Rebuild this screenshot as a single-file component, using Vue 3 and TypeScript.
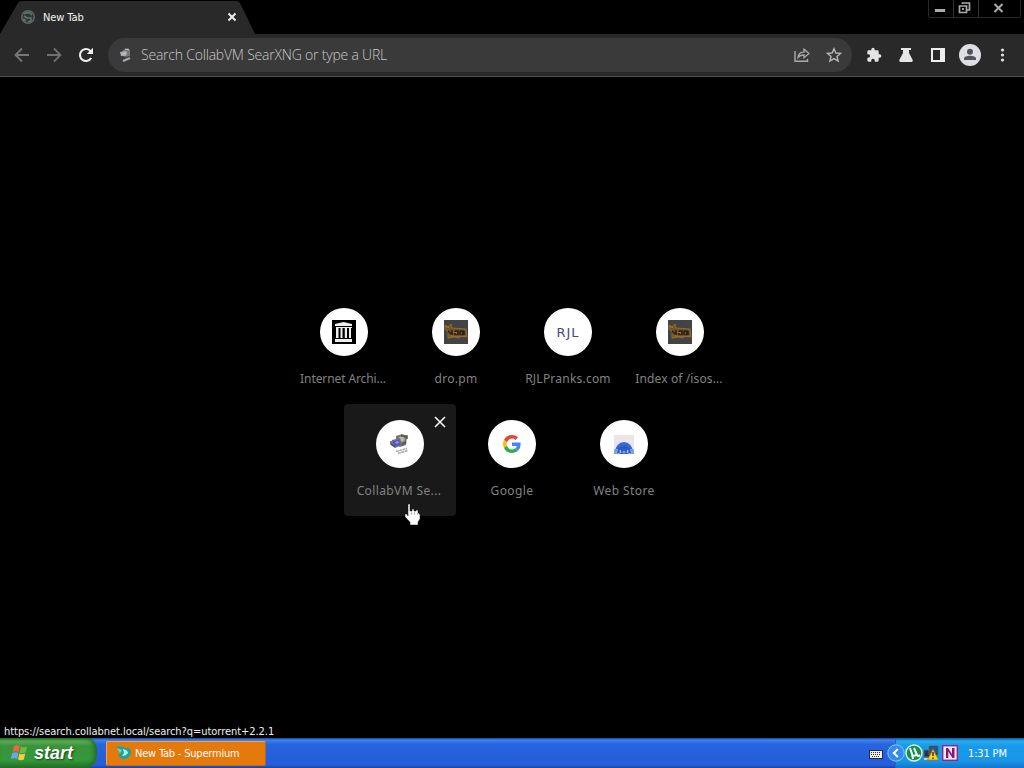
<script setup lang="ts">
interface Shortcut {
  label: string
  icon: string
  tracking: number
  hovered?: boolean
}

const rows: Shortcut[][] = [
  [
    { label: 'Internet Archi...', icon: 'archive', tracking: -0.1 },
    { label: 'dro.pm', icon: 'dro', tracking: 0.3 },
    { label: 'RJLPranks.com', icon: 'rjl', tracking: 0.22 },
    { label: 'Index of /isos...', icon: 'dro', tracking: 0.12 },
  ],
  [
    { label: 'CollabVM Se...', icon: 'collab', tracking: 0.38, hovered: true },
    { label: 'Google', icon: 'google', tracking: 0.4 },
    { label: 'Web Store', icon: 'store', tracking: 0.42 },
  ],
]
</script>

<template>
  <div class="screen">
    <header class="titlebar">
      <svg class="tab-shape" width="256" height="34" viewBox="0 0 256 34"><path d="M0 34 L18 3 Q19 1 22 1 H236 Q239 1 240 3 L255 34Z" fill="#292929" /></svg>
      <div class="tab">
        <svg width="16" height="16" viewBox="0 0 16 16"><circle cx="8" cy="8" r="6.3" fill="#303636" stroke="#5d6565" stroke-width="1.5" /><path d="M4 5Q6 3 10 4L12 6M4 7L7 9L11 9L11 12L8 13M3 10L6 12" fill="none" stroke="#687070" stroke-width="1.6" /></svg>
        <span class="tab-title">New Tab</span>
        <svg class="tab-close" width="10" height="10" viewBox="0 0 10 10"><path d="M1.5 1.5L8.5 8.5M8.5 1.5L1.5 8.5" stroke="#f2f2f2" stroke-width="1.9" /></svg>
      </div>
      <div class="window-buttons">
        <span><svg width="24" height="17" viewBox="0 0 24 17"><rect x="6" y="9" width="10" height="3" fill="#aaa" /></svg></span>
        <span><svg width="24" height="17" viewBox="0 0 24 17"><path d="M8.5 4V3H15.5V10H13M5.5 6H12.5V12.5H5.5Z" fill="none" stroke="#aaa" stroke-width="1.7" /><rect x="8" y="8" width="2" height="2" fill="#999" /></svg></span>
        <span><svg width="41" height="17" viewBox="0 0 41 17"><path d="M15.5 4L23.5 12M23.5 4L15.5 12" stroke="#aaa" stroke-width="2" /></svg></span>
      </div>
    </header>

    <nav class="toolbar">
      <svg class="tool back" width="16" height="16" viewBox="0 0 16 16"><path d="M15 8H2M8 1.5L1.5 8L8 14.5" fill="none" stroke="#777" stroke-width="1.8" /></svg>
      <svg class="tool forward" width="16" height="16" viewBox="0 0 16 16"><path d="M1 8H14M8 1.5L14.5 8L8 14.5" fill="none" stroke="#707070" stroke-width="1.8" /></svg>
      <svg class="tool reload" width="16" height="16" viewBox="0 0 16 16"><path d="M13.2 11A6 6 0 1 1 12.2 3.7L14 5.5" fill="none" stroke="#eee" stroke-width="2.1" /><path d="M15 .8V7H8.8Z" fill="#eee" /></svg>
      <div class="omnibox">
        <svg class="site-icon" width="16" height="16" viewBox="0 0 16 16"><path d="M5 3L10 1L12 3V9L7 10L3 8Z" fill="#777" /><path d="M2 5L8 4L9 6L8 9L3 9Z" fill="#aaa9b5" /><path d="M4 7L8 6M7 2L11 3" stroke="#c5c5c5" stroke-width="1" /><path d="M5 14L12 11" stroke="#aaa" stroke-width="2" /></svg>
        <span class="placeholder">Search CollabVM SearXNG or type a URL</span>
        <svg class="share" width="16" height="16" viewBox="0 0 16 16"><path d="M1 4V14.3H13.5V12" fill="none" stroke="#aaa" stroke-width="1.4" /><path d="M4 10.5Q4.5 5.2 10 5.2V2.2L15 6.6L10 10.7V8Q6 8 4 10.5Z" fill="none" stroke="#aaa" stroke-width="1.3" /></svg>
        <svg class="star" width="16" height="16" viewBox="0 0 16 16"><path d="M8 1.7L9.9 6L14.5 6.4L11 9.5L12.1 14L8 11.6L3.9 14L5 9.5L1.5 6.4L6.1 6Z" fill="none" stroke="#b6b6b6" stroke-width="1.4" /></svg>
      </div>
      <div class="actions">
        <svg width="16" height="16" viewBox="0 0 24 24"><path fill="#e4e4e4" d="M20.5 11H19V7a2 2 0 0 0-2-2h-4V3.5a2.5 2.5 0 0 0-5 0V5H4a2 2 0 0 0-2 2v3.8h1.5a2.7 2.7 0 0 1 0 5.4H2V20a2 2 0 0 0 2 2h3.8v-1.5a2.7 2.7 0 0 1 5.4 0V22H17a2 2 0 0 0 2-2v-4h1.5a2.5 2.5 0 0 0 0-5z" /></svg>
        <svg width="16" height="16" viewBox="0 0 16 16"><path d="M3 1H13V3H11V6L14.7 13Q15.3 15 13.3 15H2.7Q.7 15 1.3 13L5 6V3H3Z" fill="#e7e7e7" /></svg>
        <svg width="16" height="16" viewBox="0 0 16 16"><path fill-rule="evenodd" d="M1 1H15V15H1ZM3 3V13H10V3Z" fill="#eee" /></svg>
        <svg width="22" height="22" viewBox="0 0 22 22"><circle cx="11" cy="11" r="11" fill="#dedfe3" /><circle cx="11" cy="7.8" r="3" fill="#51535c" /><path d="M5 16V14.5C5 10.8 17 10.8 17 14.5V16Z" fill="#51535c" /></svg>
        <svg width="16" height="16" viewBox="0 0 16 16"><g fill="#e4e4e4"><circle cx="8.5" cy="3" r="1.6" /><circle cx="8.5" cy="8" r="1.6" /><circle cx="8.5" cy="13" r="1.6" /></g></svg>
      </div>
    </nav>

    <main>
      <section v-for="(row, index) in rows" :key="index" class="shortcut-row">
        <div v-for="item in row" :key="item.label" class="shortcut" :class="{ hovered: item.hovered, truncated: item.label.endsWith('...') }">
          <div class="disc">
            <svg v-if="item.icon === 'archive'" width="24" height="24" viewBox="0 0 24 24"><path fill="#000" d="M0 0H24V24H0Z" /><path fill="#eee" d="M3 4L11.5 2L20 4V6H3ZM4 7H20V8H4ZM4 8H6.5V18H4ZM8.5 8H10.5V18H8.5ZM12.8 8H15V18H12.8ZM17 8H19V18H17ZM3 19H20V22H3Z" /></svg>
            <svg v-else-if="item.icon === 'dro'" width="24" height="24" viewBox="0 0 24 24"><path fill="#424247" d="M0 0H24V24H0Z" /><path d="M1 5L4 7L7 4L8 8L22 9L23 17L17 16L15 18L10 17L4 18L4 12L1 9Z" fill="#6d5429" stroke="#98702a" stroke-width=".9" /><path d="M4 11L7 14M8 10V15M11 11V15H14V11H11M16 11H19V15H16V11M20 11V15" stroke="#241f1b" stroke-width="1.5" fill="none" /><path d="M2 6L5 8M9 12L13 13M6 16H21" stroke="#bd852a" stroke-width=".8" /></svg>
            <span v-else-if="item.icon === 'rjl'" class="rjl">RJL</span>
            <svg v-else-if="item.icon === 'collab'" width="24" height="24" viewBox="0 0 24 24"><path d="M8 4L14 2L19 4L18 13L12 15L8 13Z" fill="#777768" /><path d="M11 5L15 4L17 8L14 10L11 8Z" fill="#b8b9a7" /><path d="M4 8L12 6L14 13L7 16L3 13Z" fill="#716e91" /><path d="M5 9L11 8L12 13L7 14L5 12Z" fill="#5553ca" /><path d="M7 10L10 9L11 11L8 12Z" fill="#9692ed" /><path d="M13 4H19V7M14 13L18 10M3 9V12L7 15" stroke="#535444" stroke-width="1.5" fill="none" /><path d="M8 19.5L19 16.5M10 21.5L20 18.5" stroke="#aaa" stroke-width="1.5" stroke-dasharray="3 .4" /></svg>
            <svg v-else-if="item.icon === 'google'" width="18" height="18" viewBox="0 0 48 48"><path fill="#EA4335" d="M24 9.5c3.5 0 6.7 1.2 9.2 3.6l6.8-6.8A23.9 23.9 0 0 0 24 0 24 24 0 0 0 2.6 13.2l7.9 6.2A14.3 14.3 0 0 1 24 9.5z" /><path fill="#4285F4" d="M47 24.5c0-1.6-.2-3.1-.4-4.5H24v9h12.9a11 11 0 0 1-4.7 7.2l7.7 6A24 24 0 0 0 47 24.5z" /><path fill="#FBBC05" d="M10.5 28.6a14.5 14.5 0 0 1 0-9.2l-7.9-6.2a24 24 0 0 0 0 21.6z" /><path fill="#34A853" d="M24 48c6.5 0 12-2.1 15.9-5.8l-7.7-6A14.4 14.4 0 0 1 10.5 28.6l-7.9 6.2A24 24 0 0 0 24 48z" /></svg>
            <svg v-else width="22" height="22" viewBox="0 0 22 22"><path fill="#e9e7ed" d="M1 2H21V21H1Z" /><path stroke="#ffd9ca" d="M5 5H17" /><path fill="#3767d6" d="M2 21V19A9 10 0 0 1 20 19V21Z" /><path d="M1 16H5L7 21H1ZM17 16H21V21H15Z" fill="#7ba4ef" /><path d="M5 20A6 6 0 0 1 17 20M8 21V18L11 16L14 18V21" stroke="#2854bd" stroke-width="1.5" fill="none" /><path d="M7 17L8 20M11 18V20M15 17L14 20" stroke="#b5d0ff" stroke-width="1.2" /></svg>
          </div>
          <span class="label" :style="{ letterSpacing: item.tracking + 'px' }">{{ item.label }}</span>
          <svg v-if="item.hovered" class="remove" width="12" height="12" viewBox="0 0 12 12"><path d="M1 1L11 11M11 1L1 11" stroke="#f1f1f1" stroke-width="1.7" /></svg>
        </div>
      </section>
    </main>

    <div class="status">https://search.collabnet.local/search?q=utorrent+2.2.1</div>

    <footer class="taskbar">
      <div class="start">
        <svg width="19" height="19" viewBox="0 0 19 19"><path d="M4 2Q7 0 10 2L8.5 8Q5 6.5 2.5 8Z" fill="#e8673e" /><path d="M11 2.5Q14 4 17 2.5L15.5 8.5Q12 10 9.5 8.5Z" fill="#72b83e" /><path d="M2.3 9Q5.5 7.5 8.3 9L7 15Q4 13.5.8 15Z" fill="#6ba5ee" /><path d="M9.3 9.5Q12 11 15.3 9.5L13.8 15.5Q11 17 8 15.5Z" fill="#f2cc45" /></svg>
        <span>start</span>
      </div>
      <div class="task">
        <svg width="16" height="16" viewBox="0 0 16 16"><path d="M0 2Q5 0 9 3Q15 2 15 8Q13 14 8 14Q4 14 2 10L5 8Z" fill="#17a69b" /><path d="M1 3L6 5L4 8Z" fill="#70d9cb" /><path d="M7 4Q12 5 12 8Q10 11 6 11L8 8Z" fill="#a8f4e6" /></svg>
        <span>New Tab - Supermium</span>
      </div>
      <svg class="keyboard" width="14" height="12" viewBox="0 0 14 12"><rect x=".5" y="3.5" width="13" height="8" fill="#f0eee5" stroke="#222b42" /><path d="M2 5.5H12M2 7.5H12M3 9.5H11" stroke="#333" stroke-dasharray="1 1" /></svg>
      <div class="tray">
        <svg class="collapse" width="18" height="18" viewBox="0 0 18 18"><circle cx="9" cy="9" r="8.2" fill="#338bea" stroke="#8bc5fb" /><path d="M10.8 5L6.8 9L10.8 13" stroke="#fff" stroke-width="2" fill="none" /></svg>
        <svg width="18" height="18" viewBox="0 0 18 18"><circle cx="9" cy="9" r="8" fill="#188b53" stroke="#d5f4db" stroke-width="1.4" /><path d="M5 4L7 10Q8 13 11 11M9 4L12 11Q13 13 15 11M7 10L8 15" stroke="#eefff0" stroke-width="2" fill="none" /></svg>
        <svg class="network" width="16" height="16" viewBox="0 0 16 16"><path d="M6 1H15V10H6ZM1 5H9V12H1Z" fill="#26324c" stroke="#596b73" /><path d="M7 2H14V8H7Z" fill="#21549a" /><path d="M1 14H9" stroke="#d8cf9e" stroke-width="2" /><path d="M10 4L15.5 15H4.5Z" fill="#ffd51e" stroke="#947814" stroke-width=".7" /><path d="M10 7V11M10 12.5V14" stroke="#312b13" stroke-width="1.4" /></svg>
        <svg class="onenote" width="16" height="16" viewBox="0 0 16 16"><rect x=".7" y=".7" width="14.6" height="14.6" fill="#f3e6f4" stroke="#92277f" stroke-width="1.4" /><path d="M4 13V3H6L10 9V3H12.5V13H10.5L6.3 6.5V13Z" fill="#851970" /></svg>
        <span class="clock">1:31 PM</span>
      </div>
    </footer>

    <svg class="cursor" width="17" height="23" viewBox="0 0 17 23"><path d="M4 1H6V8H8V6H10V8H12V7H14V10H15V11H16V16L14 19V22H6V19L1 14V11H3L4 13Z" fill="#fff" stroke="#111" stroke-width=".5" /><path d="M7.5 9V12M10.5 9V12M13.5 10V12" stroke="#888" stroke-width=".6" /></svg>
  </div>
</template>

<style>
html, body { margin: 0; background: #000; overflow: hidden; }
</style>

<style scoped>
* { box-sizing: border-box; }
svg { display: block; flex: none; }
span { white-space: pre; }
.screen { position: relative; width: 1024px; height: 768px; display: flex; flex-direction: column; background: #000; overflow: hidden; font-family: "DejaVu Sans Condensed", "DejaVu Sans", sans-serif; }
.titlebar { position: relative; height: 34px; flex: none; display: flex; justify-content: space-between; }
.tab-shape { position: absolute; left: 0; top: 0; }
.tab { position: relative; height: 34px; width: 256px; padding-left: 20px; display: flex; align-items: center; }
.tab-title { margin-left: 7px; width: 184px; font-size: 11px; letter-spacing: -.1px; color: #f3f3f3; }
.window-buttons { display: flex; width: 93px; height: 18px; margin-right: 3px; border: 1px solid #292929; border-top: 0; border-radius: 0 0 2px 2px; }
.window-buttons span + span { border-left: 1px solid #333; }
.toolbar { height: 43px; flex: none; background: #292929; border-bottom: 1px solid #505050; display: flex; align-items: center; padding: 0 0 1px 14px; }
.tool { margin-right: 16px; }
.reload { margin-right: 14px; }
.omnibox { width: 744px; height: 34px; border-radius: 17px; background: #3a3a3a; display: flex; align-items: center; padding-left: 10px; }
.placeholder { margin-left: 7px; width: 653px; font: 300 14px "Open Sans", "Noto Sans", sans-serif; letter-spacing: -.21px; color: #c8c8c8; }
.star { margin-left: 16px; }
.actions { margin-left: 14px; display: flex; align-items: center; gap: 16px; }
.actions svg:nth-child(4) { margin: 0 -3px; }
main { flex: 1; padding-top: 215px; display: flex; flex-direction: column; align-items: center; }
.shortcut-row { display: flex; height: 112px; }
.shortcut { position: relative; width: 112px; height: 112px; padding-top: 16px; border-radius: 4px; display: flex; flex-direction: column; align-items: center; }
.hovered { background: #191919; }
.disc { width: 48px; height: 48px; flex: none; border-radius: 50%; background: #fff; display: flex; align-items: center; justify-content: center; }
.label { margin-top: 13px; height: 20px; line-height: 20px; font-family: "Noto Sans", sans-serif; font-size: 12px; color: #828282; }
.truncated .label { margin-right: 2px; }
.rjl { font: 13px "DejaVu Sans", sans-serif; letter-spacing: .9px; color: #484884; }
.remove { position: absolute; right: 10px; top: 12px; }
.status { height: 14px; padding-left: 4px; font-size: 11px; line-height: 15px; letter-spacing: -.05px; color: #f0f0f0; white-space: pre; }
.taskbar { height: 30px; flex: none; display: flex; align-items: center; background: linear-gradient(#17439b 0, #3c83f2 2px, #2965df 6px, #245edb 22px, #285fd8 27px, #1941a5); color: #fff; }
.start { width: 97px; height: 30px; padding-left: 10px; display: flex; align-items: center; background: linear-gradient(#286d28, #5faf57 3px, #39933b 8px, #34993a 22px, #236f28); border-radius: 0 10px 12px 0; box-shadow: inset -3px 0 4px #236e27; }
.start span { margin: 1px 0 0 5px; font: italic bold 18px "Liberation Sans", sans-serif; text-shadow: 1px 1px 2px #173e18; }
.task { margin-left: 9px; width: 160px; height: 25px; padding-left: 9px; display: flex; align-items: center; background: #e5790c; border: 1px solid #f5a347; border-right-color: #b66419; border-bottom-color: #c56a0d; border-radius: 2px; }
.task span { margin-left: 3px; font-size: 11px; letter-spacing: -.2px; }
.keyboard { margin-left: auto; }
.tray { width: 129px; height: 30px; margin-left: 12px; background: linear-gradient(#15519c 0, #25adf0 3px, #179aeb 8px, #1b95e6 23px, #1374ce); border-left: 1px solid #176ac4; display: flex; align-items: center; }
.collapse { margin-left: -9px; }
.onenote { margin-left: 3px; }
.clock { margin-left: 10px; font-size: 11px; letter-spacing: -.15px; }
.cursor { position: absolute; left: 404px; top: 503px; }
</style>
